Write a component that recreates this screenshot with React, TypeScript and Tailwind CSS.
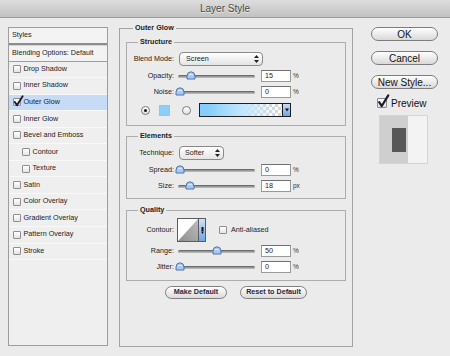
import React from "react";

const layers = [
  { name: "Drop Shadow" },
  { name: "Inner Shadow" },
  { name: "Outer Glow", checked: true, active: true },
  { name: "Inner Glow" },
  { name: "Bevel and Emboss" },
  { name: "Contour", sub: true },
  { name: "Texture", sub: true },
  { name: "Satin" },
  { name: "Color Overlay" },
  { name: "Gradient Overlay" },
  { name: "Pattern Overlay" },
  { name: "Stroke" },
];

function Check({ checked = false, big = false }: { checked?: boolean; big?: boolean }) {
  return (
    <span
      className={
        big
          ? "relative flex h-[10px] w-[10px] shrink-0 rounded-[1px] border border-[#8a8a8a] bg-gradient-to-b from-white to-[#e2e2e2]"
          : "relative flex h-[8px] w-[8px] shrink-0 rounded-[1px] border border-[#8e8e8e] bg-gradient-to-b from-white to-[#e4e4e4]"
      }
    >
      {checked && (
        <svg
          className={big ? "absolute -left-[1px] -top-[5px]" : "absolute -left-[1px] -top-[4px]"}
          width={big ? 13 : 11}
          height={big ? 14 : 12}
          viewBox="0 0 11 12"
        >
          <path
            d="M1.8 7 L4 10.3 L9.6 1.2"
            fill="none"
            stroke="#1b1d2b"
            strokeWidth="1.9"
            strokeLinecap="round"
            strokeLinejoin="round"
          />
        </svg>
      )}
    </span>
  );
}

function Label({ children }: { children: React.ReactNode }) {
  return <span className="w-[47px] shrink-0 text-right">{children}</span>;
}

function Slider({ at }: { at: number }) {
  return (
    <div className="relative ml-[4px] flex h-[12px] w-[77px] shrink-0 items-center">
      <div className="h-[3px] w-full rounded-full border-t border-[#6c6c6c] bg-gradient-to-b from-[#8a8a8a] to-[#c4c4c4]" />
      <svg className="absolute top-[1px]" style={{ left: at - 5 }} width="10" height="9" viewBox="0 0 10 9">
        <path d="M1 8 L1 5 Q1 1 5 0.8 Q9 1 9 5 L9 8 Z" fill="#a9c8ef" stroke="#4c76b2" strokeWidth="1" />
        <path d="M3 4 Q5 2.4 7 4" fill="none" stroke="#e6f0fc" strokeWidth="1" />
      </svg>
    </div>
  );
}

function Num({ v, unit }: { v: string; unit: string }) {
  return (
    <>
      <div className="ml-[6px] flex h-[12px] w-[30px] shrink-0 items-center border border-[#9a9a9a] border-t-[#707070] bg-white pl-[3px]">
        {v}
      </div>
      <span className="ml-[2px] text-[6.5px] text-[#333]">{unit}</span>
    </>
  );
}

function Arrows() {
  return (
    <svg width="5" height="8" viewBox="0 0 5 8">
      <path d="M2.5 0 L5 3 H0 Z M0 5 H5 L2.5 8 Z" fill="#222" />
    </svg>
  );
}

function Radio({ on = false }: { on?: boolean }) {
  return (
    <span className="flex h-[9px] w-[9px] shrink-0 items-center justify-center rounded-full border border-[#7a7a7a] bg-gradient-to-b from-white to-[#e0e0e0]">
      {on && <span className="h-[3px] w-[3px] rounded-full bg-[#111]" />}
    </span>
  );
}

function Group({ title, className, children }: { title: string; className: string; children: React.ReactNode }) {
  return (
    <fieldset className={"border border-[#adadad] " + className}>
      <legend className="ml-[11px] px-[2px] font-bold leading-[10px] text-[#222]">{title}</legend>
      {children}
    </fieldset>
  );
}

export default function App() {
  return (
    <div className="flex h-[356px] w-[450px] flex-col overflow-hidden bg-[#ebebeb] font-['Liberation_Sans',Arial,sans-serif] text-[7.2px] text-[#1c1c1c]">
      {/* title bar */}
      <div className="flex h-[18px] shrink-0 items-center justify-center border-b border-[#9a9a9a] bg-gradient-to-b from-[#dddddd] to-[#c2c2c2] text-[10px] text-[#4a4a4a] [text-shadow:0_1px_0_rgba(255,255,255,0.6)]">
        Layer Style
      </div>

      <div className="flex items-start">
        {/* styles list */}
        <div className="ml-[8px] mt-[9px] flex h-[319px] w-[100px] shrink-0 flex-col border border-[#9d9d9d] bg-[#efefef]">
          <div className="flex h-[15px] items-center bg-[#f3f3f3] pl-[3px]">Styles</div>
          <div className="h-[2px] bg-[#8c8c8c]" />
          <div className="h-[1px] bg-[#d4d4d4]" />
          <div className="flex h-[15.5px] items-center border-b border-[#9e9e9e] bg-[#f3f3f3] pl-[3px]">
            Blending Options: Default
          </div>
          {layers.map((l) => (
            <div
              key={l.name}
              className={
                "flex h-[16.55px] items-center border-b border-[#f9f9f9] " +
                (l.sub ? "pl-[13px] " : "pl-[4px] ") +
                (l.active ? "bg-[#c6dbf5]" : "")
              }
            >
              <Check checked={l.checked} />
              <span className="ml-[2.5px]">{l.name}</span>
            </div>
          ))}
        </div>

        {/* outer glow settings */}
        <fieldset className="ml-[11px] mt-[5px] h-[324px] w-[234px] shrink-0 border border-[#a3a3a3]">
          <legend className="ml-[13px] px-[2px] font-bold leading-[10px] text-[#222]">Outer Glow</legend>
          <div className="flex flex-col px-[6px] pt-[4px]">
            <Group title="Structure" className="">
              <div className="flex flex-col pb-[8px] pt-[5px]">
                <div className="flex h-[14px] items-center">
                  <Label>Blend Mode:</Label>
                  <div className="ml-[5px] flex h-[14px] w-[84px] items-center justify-between rounded-[4px] border border-[#8a8a8a] bg-gradient-to-b from-white to-[#e4e4e4] pl-[6px] pr-[3px]">
                    <span>Screen</span>
                    <Arrows />
                  </div>
                </div>
                <div className="mt-[4px] flex h-[12px] items-center">
                  <Label>Opacity:</Label>
                  <Slider at={13} />
                  <Num v="15" unit="%" />
                </div>
                <div className="mt-[4px] flex h-[12px] items-center">
                  <Label>Noise:</Label>
                  <Slider at={2} />
                  <Num v="0" unit="%" />
                </div>
                <div className="mt-[5px] flex h-[14px] items-center">
                  <span className="ml-[14px]">
                    <Radio on />
                  </span>
                  <span className="ml-[9px] h-[11px] w-[11px] border border-[#9cc3df] bg-[#8ccdfb]" />
                  <span className="ml-[12px]">
                    <Radio />
                  </span>
                  <div className="ml-[8px] flex h-[14px] w-[92px] border border-[#1e1e1e]">
                    <div className="flex-1 bg-[image:repeating-conic-gradient(#d6d6d6_0%_25%,#ffffff_0%_50%)] bg-[size:6px_6px]">
                      <div className="h-full w-full bg-gradient-to-r from-[#86cdff] from-10% via-[#bfe5ff] via-50% to-transparent to-95%" />
                    </div>
                    <div className="flex w-[8px] items-center justify-center border-l border-[#1e1e1e] bg-gradient-to-b from-[#c7def8] to-[#6fa6e8]">
                      <svg width="4" height="4" viewBox="0 0 4 4">
                        <path d="M0 0.5 H4 L2 3.5 Z" fill="#111" />
                      </svg>
                    </div>
                  </div>
                </div>
              </div>
            </Group>

            <Group title="Elements" className="mt-[5px]">
              <div className="flex flex-col pb-[6px] pt-[5px]">
                <div className="flex h-[14px] items-center">
                  <Label>Technique:</Label>
                  <div className="ml-[5px] flex h-[14px] w-[45px] items-center justify-between rounded-[4px] border border-[#8a8a8a] bg-gradient-to-b from-white to-[#e4e4e4] pl-[5px] pr-[3px]">
                    <span>Softer</span>
                    <Arrows />
                  </div>
                </div>
                <div className="mt-[4px] flex h-[12px] items-center">
                  <Label>Spread:</Label>
                  <Slider at={2} />
                  <Num v="0" unit="%" />
                </div>
                <div className="mt-[4px] flex h-[12px] items-center">
                  <Label>Size:</Label>
                  <Slider at={12} />
                  <Num v="18" unit="px" />
                </div>
              </div>
            </Group>

            <Group title="Quality" className="mt-[6px]">
              <div className="flex flex-col pb-[7px] pt-[3px]">
                <div className="flex h-[24px] items-center">
                  <Label>Contour:</Label>
                  <div className="ml-[3px] flex h-[24px] w-[29px] border border-[#5c5c5c] bg-white">
                    <svg className="flex-1" viewBox="0 0 21 22" preserveAspectRatio="none">
                      <defs>
                        <linearGradient id="cg" x1="0" y1="1" x2="1" y2="0">
                          <stop offset="0" stopColor="#8e8e8e" />
                          <stop offset="1" stopColor="#bdbdbd" />
                        </linearGradient>
                      </defs>
                      <path d="M0 22 L21 0 L21 22 Z" fill="url(#cg)" />
                    </svg>
                    <div className="flex w-[7px] items-center justify-center border-l border-[#5c5c5c] bg-gradient-to-b from-[#cfe3fa] to-[#6ea5e8]">
                      <svg width="3" height="7" viewBox="0 0 3 7">
                        <path d="M0.5 0 H2.5 V4 H0.5 Z M0 4.5 H3 L1.5 7 Z" fill="#111" />
                      </svg>
                    </div>
                  </div>
                  <span className="ml-[13px]">
                    <Check />
                  </span>
                  <span className="ml-[4px]">Anti-aliased</span>
                </div>
                <div className="mt-[3px] flex h-[12px] items-center">
                  <Label>Range:</Label>
                  <Slider at={39} />
                  <Num v="50" unit="%" />
                </div>
                <div className="mt-[4px] flex h-[12px] items-center">
                  <Label>Jitter:</Label>
                  <Slider at={2} />
                  <Num v="0" unit="%" />
                </div>
              </div>
            </Group>

            <div className="mt-[5px] flex justify-center gap-[13px]">
              <button className="flex h-[13px] w-[62px] items-center justify-center rounded-full border border-[#7f7f7f] bg-gradient-to-b from-white to-[#dadada] font-bold text-[#1f2740]">
                Make Default
              </button>
              <button className="flex h-[13px] w-[67px] items-center justify-center rounded-full border border-[#7f7f7f] bg-gradient-to-b from-white to-[#dadada] font-bold text-[#1f2740]">
                Reset to Default
              </button>
            </div>
          </div>
        </fieldset>

        {/* right buttons */}
        <div className="ml-[18px] mt-[9px] flex w-[67px] shrink-0 flex-col text-[10px] text-[#111]">
          {["OK", "Cancel", "New Style..."].map((b, i) => (
            <button
              key={b}
              className={
                "flex h-[14px] w-full items-center justify-center rounded-full border border-[#7d7d7d] bg-gradient-to-b from-white to-[#d9d9d9] " +
                (i > 0 ? "mt-[10px]" : "")
              }
            >
              {b}
            </button>
          ))}
          <div className="mt-[8px] flex h-[12px] items-center">
            <span className="ml-[6px]">
              <Check checked big />
            </span>
            <span className="ml-[4px]">Preview</span>
          </div>
          <div className="ml-[8px] mt-[6px] flex h-[49px] w-[49px] border border-[#d4d4d4] bg-[#f3f3f3]">
            <div className="h-full w-[28px] bg-[#cfcfcf] pl-[12px] pt-[12px]">
              <div className="h-[24px] w-[14px] bg-[#575757]" />
            </div>
          </div>
        </div>
      </div>
    </div>
  );
}
